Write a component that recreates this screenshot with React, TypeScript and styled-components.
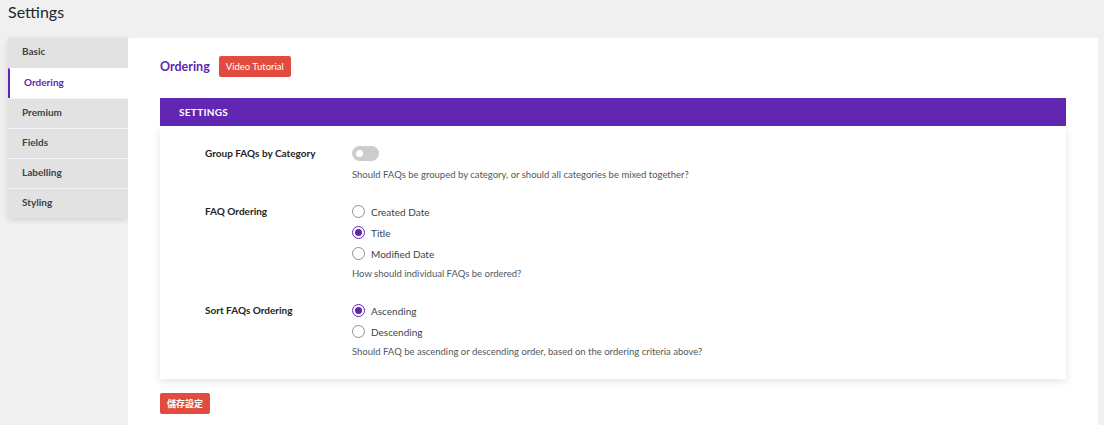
import React, { useState } from 'react';
import styled, { createGlobalStyle } from 'styled-components';

const GlobalStyle = createGlobalStyle`
  html, body {
    margin: 0;
    padding: 0;
    background: #f0f0f0;
    font-family: Lato, "Open Sans", "Liberation Sans", sans-serif;
    color: #23282d;
  }
  * { box-sizing: border-box; }
`;

const Page = styled.div`
  padding: 0 6px 0 8px;
  min-height: 425px;
`;

const Title = styled.h1`
  margin: 0;
  height: 38px;
  line-height: 24px;
  font-size: 16px;
  font-weight: 400;
  color: #23282d;
`;

const Body = styled.div`
  display: flex;
  align-items: flex-start;
`;

const Tabs = styled.ul`
  list-style: none;
  margin: 0;
  padding: 0;
  width: 120px;
  flex-shrink: 0;
  background: #e2e2e2;
  box-shadow: 0 2px 6px rgba(0, 0, 0, 0.12);
`;

const Tab = styled.li<{ $active?: boolean }>`
  height: 30px;
  line-height: 27px;
  padding-left: 14px;
  font-size: 10px;
  font-weight: 700;
  color: ${p => (p.$active ? '#5f27b0' : '#3c434a')};
  background: ${p => (p.$active ? '#fff' : 'transparent')};
  border-left: ${p => (p.$active ? '2px solid #5f27b0' : 'none')};
  border-top: 1px solid ${p => (p.$active ? '#fff' : '#f4f4f4')};
  &:first-child { border-top: none; }
`;

const Main = styled.div`
  flex: 1;
  background: #fff;
  min-height: 387px;
  padding: 18px 32px 13px 32px;
`;

const HeadRow = styled.div`
  display: flex;
  align-items: center;
  gap: 9px;
  height: 20px;
`;

const Heading = styled.h2`
  margin: 0;
  font-size: 12.5px;
  font-weight: 700;
  color: #5f27b0;
`;

const RedButton = styled.button<{ $save?: boolean }>`
  border: none;
  border-radius: 2px;
  background: #e24c40;
  color: #fff;
  font-family: Lato, "Noto Sans CJK TC", sans-serif;
  font-size: ${p => (p.$save ? '9px' : '9.5px')};
  font-weight: ${p => (p.$save ? 700 : 400)};
  height: 21px;
  padding: 0 7px;
  cursor: pointer;
`;

const SettingsBar = styled.div`
  margin-top: 22px;
  height: 28px;
  background: #6127b3;
  color: #fff;
  font-size: 10px;
  font-weight: 700;
  letter-spacing: 0.3px;
  display: flex;
  align-items: center;
  padding-left: 19px;
`;

const Card = styled.div`
  background: #fff;
  box-shadow: 0 3px 8px rgba(0, 0, 0, 0.1);
  padding: 20px 0 21px 45px;
  display: flex;
  flex-direction: column;
  gap: 20px;
`;

const Row = styled.div`
  display: flex;
  align-items: flex-start;
`;

const Label = styled.div<{ $lh: number }>`
  width: 147px;
  flex-shrink: 0;
  font-size: 10px;
  font-weight: 700;
  line-height: ${p => p.$lh}px;
  color: #1d2327;
`;

const Control = styled.div`
  display: flex;
  flex-direction: column;
  align-items: flex-start;
`;

const Desc = styled.p<{ $gap: number }>`
  margin: ${p => p.$gap}px 0 0;
  font-size: 9.5px;
  line-height: 13px;
  color: #50575e;
`;

const Toggle = styled.button<{ $on?: boolean }>`
  position: relative;
  border: none;
  padding: 0;
  width: 27px;
  height: 15px;
  border-radius: 8px;
  background: ${p => (p.$on ? '#5f27b0' : '#cccccc')};
  cursor: pointer;
  &::after {
    content: '';
    position: absolute;
    top: 4px;
    left: ${p => (p.$on ? '16px' : '4px')};
    width: 7px;
    height: 7px;
    border-radius: 50%;
    background: #fff;
  }
`;

const RadioRow = styled.label`
  display: flex;
  align-items: center;
  gap: 6px;
  height: 21px;
  font-size: 10px;
  color: #3c434a;
  cursor: pointer;
`;

const RadioDot = styled.span<{ $checked?: boolean }>`
  width: 13px;
  height: 13px;
  border-radius: 50%;
  border: 1px solid ${p => (p.$checked ? '#5f27b0' : '#8c8f94')};
  display: inline-flex;
  align-items: center;
  justify-content: center;
  background: #fff;
  &::after {
    content: '';
    width: 7px;
    height: 7px;
    border-radius: 50%;
    background: ${p => (p.$checked ? '#5f27b0' : 'transparent')};
  }
`;

const Footer = styled.div`
  margin-top: 12px;
`;

type RadioGroupProps = {
  options: string[];
  value: string;
  onChange: (v: string) => void;
};

const RadioGroup: React.FC<RadioGroupProps> = ({ options, value, onChange }) => (
  <>
    {options.map(o => (
      <RadioRow key={o} onClick={() => onChange(o)}>
        <RadioDot $checked={o === value} />
        {o}
      </RadioRow>
    ))}
  </>
);

const tabs = ['Basic', 'Ordering', 'Premium', 'Fields', 'Labelling', 'Styling'];

export default function App() {
  const [order, setOrder] = useState('Title');
  const [sort, setSort] = useState('Ascending');
  const [grouped, setGrouped] = useState(false);

  return (
    <Page>
      <GlobalStyle />
      <Title>Settings</Title>
      <Body>
        <Tabs>
          {tabs.map(t => (
            <Tab key={t} $active={t === 'Ordering'}>{t}</Tab>
          ))}
        </Tabs>
        <Main>
          <HeadRow>
            <Heading>Ordering</Heading>
            <RedButton>Video Tutorial</RedButton>
          </HeadRow>
          <SettingsBar>SETTINGS</SettingsBar>
          <Card>
            <Row>
              <Label $lh={15}>Group FAQs by Category</Label>
              <Control>
                <Toggle $on={grouped} onClick={() => setGrouped(!grouped)} />
                <Desc $gap={7}>Should FAQs be grouped by category, or should all categories be mixed together?</Desc>
              </Control>
            </Row>
            <Row>
              <Label $lh={21}>FAQ Ordering</Label>
              <Control>
                <RadioGroup options={['Created Date', 'Title', 'Modified Date']} value={order} onChange={setOrder} />
                <Desc $gap={3}>How should individual FAQs be ordered?</Desc>
              </Control>
            </Row>
            <Row>
              <Label $lh={21}>Sort FAQs Ordering</Label>
              <Control>
                <RadioGroup options={['Ascending', 'Descending']} value={sort} onChange={setSort} />
                <Desc $gap={3}>Should FAQ be ascending or descending order, based on the ordering criteria above?</Desc>
              </Control>
            </Row>
          </Card>
          <Footer>
            <RedButton $save>儲存設定</RedButton>
          </Footer>
        </Main>
      </Body>
    </Page>
  );
}
